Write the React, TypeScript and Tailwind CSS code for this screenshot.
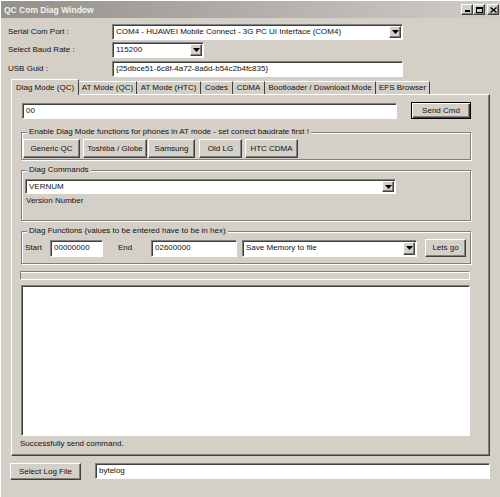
import React from 'react'

const raised =
  'border border-t-white border-l-white border-r-[#404040] border-b-[#404040] shadow-[inset_-1px_-1px_0_#808080] bg-[#d4d0c8]'
const sunken =
  'border border-t-[#808080] border-l-[#808080] border-r-white border-b-white shadow-[inset_1px_1px_0_#404040]'
const etched = 'border border-[#808080] shadow-[inset_1px_1px_0_#fff,1px_1px_0_#fff]'

function Btn({ label, w, h, className = '', isDefault = false }: { label: string; w: string; h: string; className?: string; isDefault?: boolean }) {
  const frame = isDefault
    ? 'border border-black bg-[#d4d0c8] shadow-[inset_1px_1px_0_#fff,inset_-1px_-1px_0_#404040,inset_-2px_-2px_0_#808080]'
    : raised
  return (
    <button className={`${frame} ${w} ${h} ${className} flex items-center justify-center shrink-0 text-[#111]`}>
      {label}
    </button>
  )
}

function TextBox({ value, w, h, className = '' }: { value: string; w: string; h: string; className?: string }) {
  return (
    <div className={`${sunken} ${w} ${h} ${className} bg-white flex items-center pl-[3px] shrink-0 whitespace-nowrap overflow-hidden`}>
      {value}
    </div>
  )
}

function Arrow() {
  return (
    <svg width="7" height="4" viewBox="0 0 7 4">
      <path d="M0 0h7L3.5 4z" fill="#000" />
    </svg>
  )
}

function Combo({ value, w, h, className = '' }: { value: string; w: string; h: string; className?: string }) {
  return (
    <div className={`${sunken} ${w} ${h} ${className} bg-white flex items-stretch shrink-0 p-[1px]`}>
      <div className="flex-1 flex items-center pl-[2px] whitespace-nowrap overflow-hidden">{value}</div>
      <div className={`${raised} w-[12px] flex items-center justify-center`}>
        <Arrow />
      </div>
    </div>
  )
}

function Group({ title, className = '', children }: { title: string; className?: string; children: React.ReactNode }) {
  return (
    <div className={`relative ${etched} ${className}`}>
      <span className="absolute left-[5px] -top-[6px] bg-[#d4d0c8] px-[2px] leading-[10px] whitespace-nowrap">{title}</span>
      {children}
    </div>
  )
}

const tabs = [
  { label: 'Diag Mode (QC)', w: 'w-[68px]' },
  { label: 'AT Mode (QC)', w: 'w-[58px]' },
  { label: 'AT Mode (HTC)', w: 'w-[64px]' },
  { label: 'Codes', w: 'w-[32px]' },
  { label: 'CDMA', w: 'w-[32px]' },
  { label: 'Bootloader / Download Mode', w: 'w-[111px]' },
  { label: 'EFS Browser', w: 'w-[54px]' },
]

export default function App() {
  return (
    <div className="w-[500px] h-[497px] bg-[#d4d0c8] text-[#111] text-[8px] leading-[10px] font-['Liberation_Sans',Arial,sans-serif] flex flex-col border-t border-l border-white overflow-hidden">
      {/* Title bar */}
      <div className="h-[17px] flex items-center justify-between bg-gradient-to-r from-[#94918d] to-[#d0ccc7] pl-[3px] pr-[1px]">
        <span className="font-bold text-[8.5px] text-[#f2f1ee]">QC Com Diag Window</span>
        <div className="flex items-center">
          <div className={`${raised} w-[12px] h-[11px] flex items-end justify-center pb-[2px]`}>
            <div className="w-[5px] h-[2px] bg-black" />
          </div>
          <div className={`${raised} w-[12px] h-[11px] flex items-center justify-center`}>
            <div className="w-[7px] h-[6px] border border-black border-t-2" />
          </div>
          <div className={`${raised} w-[12px] h-[11px] ml-[2px] flex items-center justify-center`}>
            <svg width="7" height="6" viewBox="0 0 7 6">
              <path d="M0.5 0.5L6.5 5.5M6.5 0.5L0.5 5.5" stroke="#000" strokeWidth="1.4" />
            </svg>
          </div>
        </div>
      </div>

      {/* Port settings */}
      <div className="mt-[6px] pl-[7px] flex items-center h-[16px]">
        <span className="w-[104px]">Serial Com Port :</span>
        <Combo w="w-[291px]" h="h-[16px]" value="COM4 - HUAWEI Mobile Connect - 3G PC UI Interface (COM4)" />
      </div>
      <div className="mt-[2px] pl-[7px] flex items-center h-[16px]">
        <span className="w-[104px]">Select Baud Rate :</span>
        <Combo w="w-[92px]" h="h-[16px]" value="115200" />
      </div>
      <div className="mt-[3px] pl-[7px] flex items-center h-[16px]">
        <span className="w-[104px]">USB Guid :</span>
        <TextBox w="w-[291px]" h="h-[16px]" value="{25dbce51-6c8f-4a72-8a6d-b54c2b4fc835}" />
      </div>

      {/* Tabs */}
      <div className="mt-[2px] ml-[10px] h-[15px] flex items-end">
        {tabs.map((t, i) =>
          i === 0 ? (
            <div
              key={t.label}
              className={`${t.w} h-[16px] -mb-[1px] relative z-10 bg-[#d4d0c8] border-t border-l border-white border-r border-r-[#404040] flex items-center justify-center whitespace-nowrap`}
            >
              {t.label}
            </div>
          ) : (
            <div
              key={t.label}
              className={`${t.w} h-[13px] border-t border-white border-r border-r-[#404040] flex items-center justify-center whitespace-nowrap`}
            >
              {t.label}
            </div>
          )
        )}
      </div>

      {/* Tab panel */}
      <div className="ml-[10px] w-[479px] h-[362px] border border-t-white border-l-white border-r-[#404040] border-b-[#404040] shadow-[inset_-1px_-1px_0_#808080] flex flex-col">
        <div className="mt-[7px] flex items-start">
          <TextBox w="w-[375px]" h="h-[16px]" className="ml-[10px] mt-[1px]" value="00" />
          <Btn label="Send Cmd" w="w-[60px]" h="h-[17px]" className="ml-[14px]" isDefault />
        </div>

        <Group title="Enable Diag Mode functions for phones in AT mode - set correct baudrate first !" className="mt-[13px] ml-[9px] w-[450px] pt-[6px] pb-[1px]">
          <div className="flex">
            <Btn label="Generic QC" w="w-[57px]" h="h-[19px]" className="ml-[1px]" />
            <Btn label="Toshiba / Globe" w="w-[64px]" h="h-[19px]" className="ml-[3px]" />
            <Btn label="Samsung" w="w-[47px]" h="h-[19px]" className="ml-[1px]" />
            <Btn label="Old LG" w="w-[43px]" h="h-[19px]" className="ml-[4px]" />
            <Btn label="HTC CDMA" w="w-[53px]" h="h-[19px]" className="ml-[3px]" />
          </div>
        </Group>

        <Group title="Diag Commands" className="mt-[10px] ml-[9px] w-[450px] pt-[8px] pb-[14px]">
          <Combo w="w-[371px]" h="h-[15px]" className="ml-[3px]" value="VERNUM" />
          <div className="mt-[2px] ml-[4px]">Version Number</div>
        </Group>

        <Group title="Diag Functions (values to be entered have to be in hex)" className="mt-[10px] ml-[9px] w-[450px] pt-[7px] pb-[6px]">
          <div className="flex items-center h-[18px]">
            <span className="ml-[3px] w-[25px]">Start</span>
            <TextBox w="w-[53px]" h="h-[17px]" value="00000000" />
            <span className="ml-[15px] w-[33px]">End</span>
            <TextBox w="w-[86px]" h="h-[17px]" value="02600000" />
            <Combo w="w-[175px]" h="h-[17px]" className="ml-[5px]" value="Save Memory to file" />
            <Btn label="Lets go" w="w-[41px]" h="h-[18px]" className="ml-[8px]" />
          </div>
        </Group>

        {/* progress bar */}
        <div className="mt-[7px] ml-[8px] w-[450px] h-[9px] border border-t-[#808080] border-l-[#808080] border-r-white border-b-white shadow-[inset_0_1px_0_#fff]" />

        {/* output log */}
        <div className={`${sunken} mt-[5px] ml-[9px] w-[449px] h-[151px] bg-white`} />

        <div className="mt-[3px] ml-[8px]">Successfully send command.</div>
      </div>

      {/* Log file */}
      <div className="mt-[7px] ml-[9px] flex items-start">
        <Btn label="Select Log File" w="w-[71px]" h="h-[17px]" />
        <TextBox w="w-[395px]" h="h-[16px]" className="ml-[14px]" value="bytelog" />
      </div>
    </div>
  )
}
